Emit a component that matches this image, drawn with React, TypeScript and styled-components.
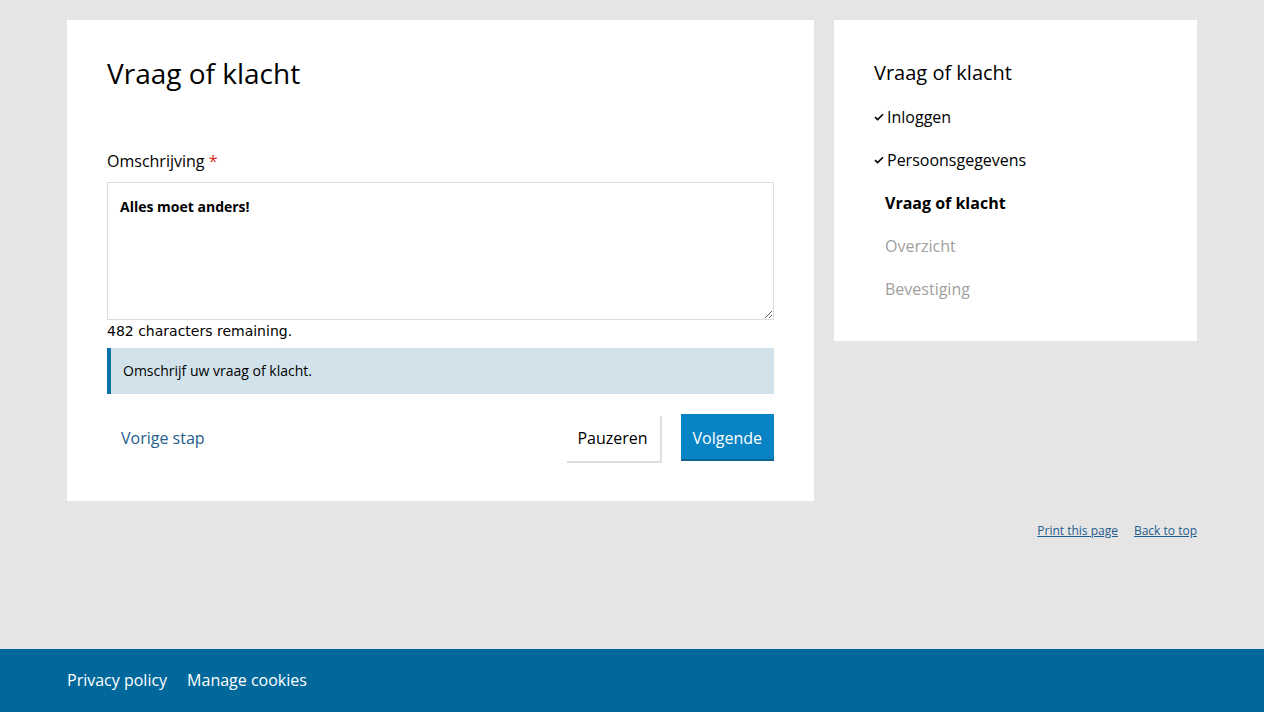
import React from "react";
import styled, { createGlobalStyle } from "styled-components";

const GlobalStyle = createGlobalStyle`
  html, body { margin: 0; padding: 0; }
  body {
    background: #e5e5e5;
    font-family: "Open Sans", "Liberation Sans", sans-serif;
    color: #000;
  }
  * { box-sizing: border-box; }
`;

const Page = styled.div`
  min-height: 712px;
  display: flex;
  flex-direction: column;
`;

const Main = styled.main`
  flex: 1;
  width: 1130px;
  margin: 0 auto;
  padding-top: 20px;
`;

const Columns = styled.div`
  display: grid;
  grid-template-columns: 747px 363px;
  gap: 20px;
  align-items: start;
`;

const Card = styled.section`
  background: #fff;
  padding: 39px 40px 40px;
`;

const Title = styled.h1`
  margin: 0;
  font-size: 28px;
  font-weight: 400;
  line-height: 28px;
`;

const Field = styled.div`
  margin-top: 63px;
`;

const Label = styled.label`
  display: block;
  font-size: 16px;
  line-height: 22px;
  margin-bottom: 10px;
`;

const Required = styled.span`
  color: #d52b1e;
`;

const TextArea = styled.textarea`
  display: block;
  width: 100%;
  height: 138px;
  border: 1px solid #dcdcdc;
  padding: 14px 12px;
  font-family: "Open Sans", sans-serif;
  font-weight: 700;
  font-size: 14px;
  line-height: 20px;
  color: #000;
  resize: vertical;
  outline: none;
`;

const Remaining = styled.div`
  font-family: "DejaVu Sans", sans-serif;
  font-size: 14px;
  line-height: 22px;
`;

const Info = styled.div`
  margin-top: 6px;
  background: #d2e2eb;
  border-left: 4px solid #0b71a9;
  padding: 12px 12px;
  font-size: 14px;
  line-height: 22px;
`;

const Actions = styled.div`
  display: flex;
  align-items: center;
  margin-top: 20px;
`;

const BackLink = styled.a`
  color: #235d8c;
  font-size: 16px;
  text-decoration: none;
  padding-left: 14px;
  margin-right: auto;
`;

const Button = styled.button<{ $primary?: boolean }>`
  font-family: "Open Sans", sans-serif;
  font-size: 16px;
  height: 47px;
  padding: 0 12px;
  border: none;
  cursor: pointer;
  background: ${(p) => (p.$primary ? "#0883c3" : "#fff")};
  color: ${(p) => (p.$primary ? "#fff" : "#000")};
  box-shadow: ${(p) =>
    p.$primary ? "inset 0 -2px 0 #0a6592" : "2px 2px 0 #dedede"};
  & + & {
    margin-left: 21px;
  }
`;

const Sidebar = styled.aside`
  background: #fff;
  padding: 40px 40px 31px;
`;

const SideTitle = styled.h2`
  margin: 0;
  font-size: 20px;
  font-weight: 400;
  line-height: 26px;
`;

const Steps = styled.ol`
  list-style: none;
  margin: 9px 0 0;
  padding: 0;
`;

const Step = styled.li<{ $state: "done" | "current" | "todo" }>`
  display: flex;
  align-items: center;
  height: 43px;
  font-size: 16px;
  font-weight: ${(p) => (p.$state === "current" ? 700 : 400)};
  color: ${(p) => (p.$state === "todo" ? "#a0a0a0" : "#000")};
  padding-left: ${(p) => (p.$state === "done" ? 0 : 11)}px;
`;

const Check = styled.svg`
  width: 10px;
  height: 8px;
  margin-right: 3px;
  flex: none;
`;

const Utility = styled.div`
  display: flex;
  justify-content: flex-end;
  gap: 16px;
  margin-top: 21px;
`;

const SmallLink = styled.a`
  font-size: 12px;
  color: #235d8c;
  text-decoration: underline;
`;

const Footer = styled.footer`
  background: #01689b;
  height: 63px;
  display: flex;
  align-items: center;
`;

const FooterInner = styled.div`
  width: 1130px;
  margin: 0 auto;
  display: flex;
  gap: 20px;
  padding-bottom: 2px;
`;

const FooterLink = styled.a`
  color: #fff;
  font-size: 16px;
  text-decoration: none;
`;

const CheckIcon = () => (
  <Check viewBox="0 0 10 8">
    <path d="M1 4.2 L3.6 6.6 L9 1.2" fill="none" stroke="#000" strokeWidth="1.6" />
  </Check>
);

export default function App() {
  return (
    <>
      <GlobalStyle />
      <Page>
        <Main>
          <Columns>
            <Card>
              <Title>Vraag of klacht</Title>
              <Field>
                <Label htmlFor="omschrijving">
                  Omschrijving <Required>*</Required>
                </Label>
                <TextArea id="omschrijving" defaultValue="Alles moet anders!" />
                <Remaining>482 characters remaining.</Remaining>
                <Info>Omschrijf uw vraag of klacht.</Info>
              </Field>
              <Actions>
                <BackLink href="#">Vorige stap</BackLink>
                <Button>Pauzeren</Button>
                <Button $primary>Volgende</Button>
              </Actions>
            </Card>
            <Sidebar>
              <SideTitle>Vraag of klacht</SideTitle>
              <Steps>
                <Step $state="done">
                  <CheckIcon />
                  Inloggen
                </Step>
                <Step $state="done">
                  <CheckIcon />
                  Persoonsgegevens
                </Step>
                <Step $state="current">Vraag of klacht</Step>
                <Step $state="todo">Overzicht</Step>
                <Step $state="todo">Bevestiging</Step>
              </Steps>
            </Sidebar>
          </Columns>
          <Utility>
            <SmallLink href="#">Print this page</SmallLink>
            <SmallLink href="#">Back to top</SmallLink>
          </Utility>
        </Main>
        <Footer>
          <FooterInner>
            <FooterLink href="#">Privacy policy</FooterLink>
            <FooterLink href="#">Manage cookies</FooterLink>
          </FooterInner>
        </Footer>
      </Page>
    </>
  );
}
